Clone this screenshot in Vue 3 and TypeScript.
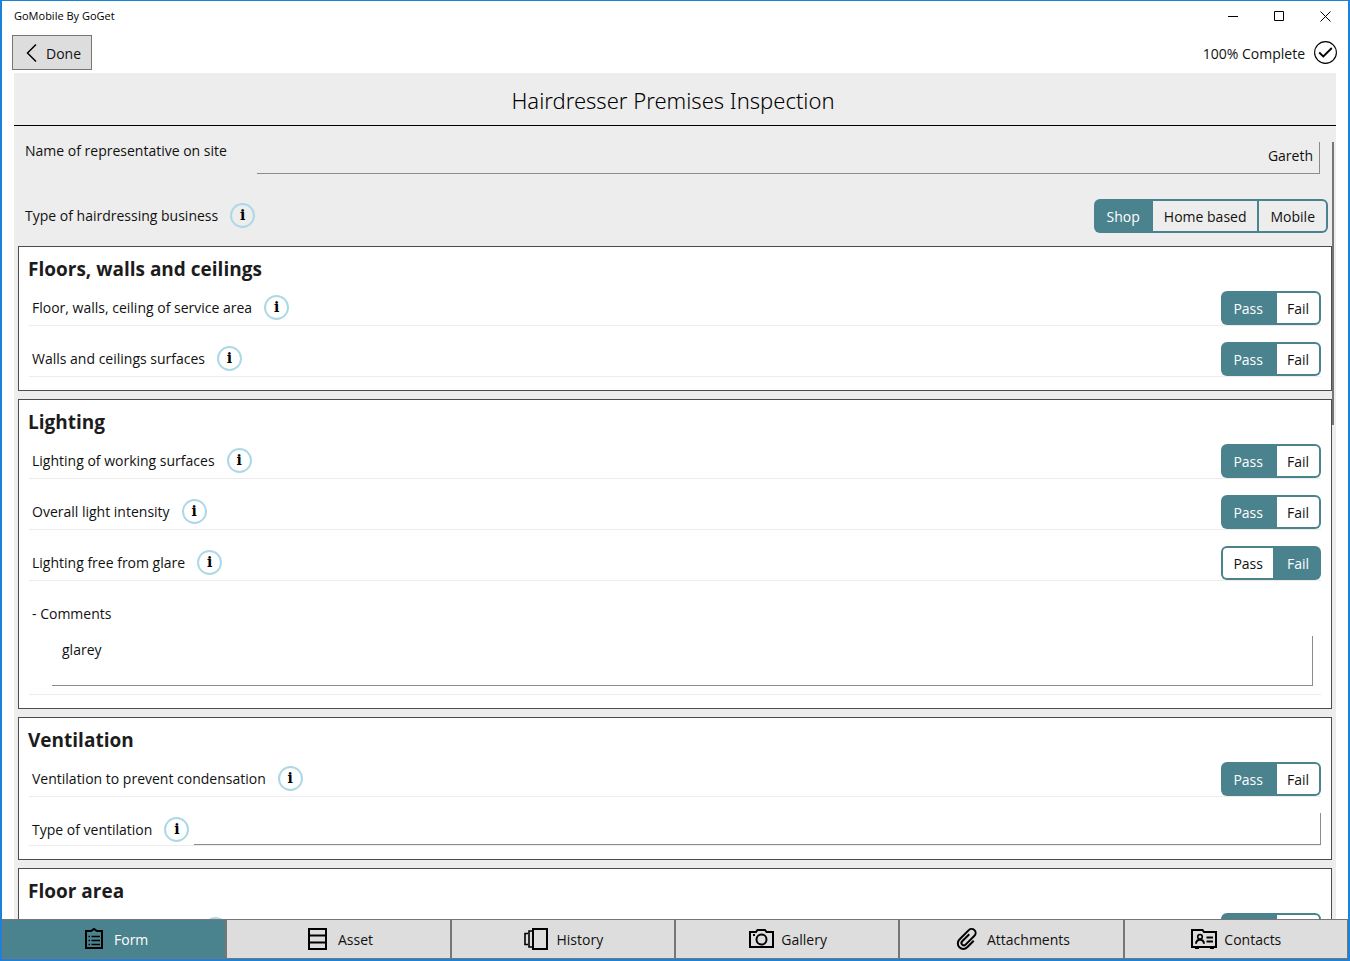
<script setup lang="ts">
import { reactive, ref } from 'vue'

interface Item {
  id: string
  label: string
  kind: 'check' | 'text'
}

interface Section {
  title: string
  items: Item[]
}

const representative = ref('Gareth')
const businessTypes = ['Shop', 'Home based', 'Mobile']
const businessType = ref('Shop')
const results = ['Pass', 'Fail']

const sections: Section[] = [
  {
    title: 'Floors, walls and ceilings',
    items: [
      { id: 'service', label: 'Floor, walls, ceiling of service area', kind: 'check' },
      { id: 'surfaces', label: 'Walls and ceilings surfaces', kind: 'check' },
    ],
  },
  {
    title: 'Lighting',
    items: [
      { id: 'working', label: 'Lighting of working surfaces', kind: 'check' },
      { id: 'intensity', label: 'Overall light intensity', kind: 'check' },
      { id: 'glare', label: 'Lighting free from glare', kind: 'check' },
    ],
  },
  {
    title: 'Ventilation',
    items: [
      { id: 'condensation', label: 'Ventilation to prevent condensation', kind: 'check' },
      { id: 'ventilationType', label: 'Type of ventilation', kind: 'text' },
    ],
  },
  {
    title: 'Floor area',
    items: [{ id: 'chair', label: 'Floor area for each chair', kind: 'check' }],
  },
]

const answers = reactive<Record<string, string>>({
  service: 'Pass',
  surfaces: 'Pass',
  working: 'Pass',
  intensity: 'Pass',
  glare: 'Fail',
  condensation: 'Pass',
  ventilationType: '',
  chair: 'Pass',
})
const comments = reactive<Record<string, string>>({ glare: 'glarey' })

const tabs = ['Form', 'Asset', 'History', 'Gallery', 'Attachments', 'Contacts']
const activeTab = ref('Form')
</script>

<template>
  <div class="window">
    <header class="titlebar">
      <span class="app-name">GoMobile By GoGet</span>
      <div class="window-buttons">
        <button type="button" aria-label="Minimize">
          <svg width="11" height="11" viewBox="0 0 11 11"><path d="M0 5.5H10" /></svg>
        </button>
        <button type="button" aria-label="Maximize">
          <svg width="11" height="11" viewBox="0 0 11 11"><path d="M.5 .5H9.5V9.5H.5Z" /></svg>
        </button>
        <button type="button" aria-label="Close">
          <svg width="11" height="11" viewBox="0 0 11 11"><path d="M.5 .5L10.5 10.5M10.5 .5L.5 10.5" /></svg>
        </button>
      </div>
    </header>

    <div class="toolbar">
      <button type="button" class="done">
        <svg width="12" height="20" viewBox="0 0 12 20"><path d="M10 1.5L1.5 10L10 18.5" /></svg>
        <span>Done</span>
      </button>
      <div class="status">
        <span>100% Complete</span>
        <svg width="23" height="23" viewBox="0 0 23 23">
          <circle cx="11.5" cy="11.5" r="10.9" />
          <path class="tick" d="M5.2 11.5L9.3 15.5L17.8 7" />
        </svg>
      </div>
    </div>

    <main class="sheet">
      <h1>Hairdresser Premises Inspection</h1>
      <div class="scroller">
        <div class="name-row">
          <label for="representative">Name of representative on site</label>
          <input id="representative" v-model="representative" class="line-input right" type="text" />
        </div>
        <div class="type-row">
          <span id="business-label" class="text">Type of hairdressing business</span>
          <button type="button" class="info" aria-label="About type of hairdressing business">i</button>
          <div class="segments narrow" role="radiogroup" aria-labelledby="business-label">
            <label v-for="t in businessTypes" :key="t" :class="{ on: businessType === t }">
              <input v-model="businessType" type="radio" name="business" :value="t" />{{ t }}
            </label>
          </div>
        </div>

        <section v-for="s in sections" :key="s.title" class="card">
          <h2>{{ s.title }}</h2>
          <template v-for="item in s.items" :key="item.id">
            <div v-if="item.kind === 'check'" class="row">
              <span :id="item.id + '-label'" class="text">{{ item.label }}</span>
              <button type="button" class="info" :aria-label="'About ' + item.label">i</button>
              <div class="segments" role="radiogroup" :aria-labelledby="item.id + '-label'">
                <label v-for="r in results" :key="r" :class="{ on: answers[item.id] === r }">
                  <input v-model="answers[item.id]" type="radio" :name="item.id" :value="r" />{{ r }}
                </label>
              </div>
            </div>
            <div v-else class="row text-row">
              <label :for="item.id" class="text">{{ item.label }}</label>
              <button type="button" class="info" :aria-label="'About ' + item.label">i</button>
              <input :id="item.id" v-model="answers[item.id]" class="line-input" type="text" />
            </div>
            <div v-if="item.id in comments" class="comment-row">
              <label :for="item.id + '-comment'">- Comments</label>
              <textarea :id="item.id + '-comment'" v-model="comments[item.id]"></textarea>
            </div>
          </template>
        </section>
        <div class="scroll-thumb"></div>
      </div>
    </main>

    <nav class="tabs">
      <button v-for="t in tabs" :key="t" type="button" :class="{ active: activeTab === t }" @click="activeTab = t">
        <svg width="28" height="24" viewBox="0 0 28 24">
          <g v-if="t === 'Form'">
            <path d="M6 4H11L14 2L17 4H22V21H6Z" />
            <path class="thin" d="M8.5 9.5H10M8.5 13.5H10M8.5 17.5H10M11.5 9.5H20M11.5 13.5H20M11.5 17.5H20" />
          </g>
          <g v-else-if="t === 'Asset'">
            <path d="M5 2H22V22H5ZM5 8.5H22M5 15.5H22" />
          </g>
          <g v-else-if="t === 'History'">
            <path d="M11 2H25V22H11Z" />
            <path class="thin" d="M10 4H7V20H10M6 6.5H3V17.5H6" />
          </g>
          <g v-else-if="t === 'Gallery'">
            <path d="M3 5H9L10.5 3H18L19.5 5H26V20H3Z" />
            <circle cx="14.5" cy="12.5" r="5" />
            <path class="dot" d="M6 7H8V9H6Z" />
          </g>
          <g v-else-if="t === 'Attachments'">
            <path
              transform="translate(14 12) rotate(45)"
              d="M6 -3.5V5.7A5.5 5.5 0 0 1 -5 5.7V-7.5A4 4 0 0 1 3 -7.5V5A2.4 2.4 0 0 1 -1.8 5V-5"
            />
          </g>
          <g v-else>
            <path d="M2 3H12.5L14 5H26V20H2Z" />
            <path class="dot" d="M5 19H9V22H5ZM20 19H24V22H20Z" />
            <circle class="thin" cx="10" cy="9.8" r="2.3" />
            <path d="M6 16.8C6.4 11.4 13.6 11.4 14 16.8M16.5 10.5H23M16.5 14.5H23" />
          </g>
        </svg>
        <span>{{ t }}</span>
      </button>
    </nav>
  </div>
</template>

<style>
body {
  margin: 0;
}
</style>

<style scoped>
.window {
  --teal: #4a838e;
  --paper: #ededed;
  --grey: #767676;
  box-sizing: border-box;
  height: 100vh;
  display: flex;
  flex-direction: column;
  overflow: hidden;
  border: 2px solid #1a82d8;
  border-top-width: 1px;
  background: #fff;
  color: #111;
  font-family: 'Open Sans', 'Noto Sans', sans-serif;
  font-size: 14px;
  line-height: 20px;
}

.window *,
.window *::before {
  box-sizing: border-box;
}

button,
input,
textarea {
  font: inherit;
  color: inherit;
  border-radius: 0;
  margin: 0;
}

svg {
  fill: none;
  stroke: #000;
  flex: none;
}

.titlebar {
  display: flex;
  justify-content: space-between;
  align-items: center;
  height: 30px;
  padding-left: 12px;
  flex: none;
}

.app-name {
  font-size: 11px;
  color: #000;
}

.window-buttons {
  display: flex;
}

.window-buttons button {
  display: flex;
  align-items: center;
  justify-content: center;
  width: 46px;
  height: 30px;
  padding: 0;
  border: 0;
  background: none;
}

.toolbar {
  display: flex;
  justify-content: space-between;
  align-items: center;
  padding: 4px 11px 3px 10px;
  flex: none;
}

.done {
  display: flex;
  align-items: center;
  gap: 8px;
  height: 35px;
  padding: 0 10px 0 13px;
  border: 1px solid var(--grey);
  background: #ddd;
}

.done svg {
  stroke-width: 1.5;
}

.status {
  display: flex;
  align-items: center;
  gap: 9px;
}

.done span,
.status span,
.tabs span {
  padding-top: 2px;
}

.status circle {
  stroke-width: 1.1;
}

.tick {
  stroke-width: 1.8;
}

.sheet {
  flex: 1;
  min-height: 0;
  display: flex;
  flex-direction: column;
  margin: 0 12px;
  background: var(--paper);
}

h1 {
  margin: 0;
  padding: 11px 4px 9px 0;
  border-bottom: 1px solid #000;
  text-align: center;
  font-family: 'Noto Sans', 'Open Sans', sans-serif;
  font-size: 22px;
  line-height: 32px;
  font-weight: 300;
  color: #000;
}

.scroller {
  position: relative;
  flex: 1;
  min-height: 0;
  margin-top: 16px;
  padding: 0 4px;
  overflow: hidden;
}

.scroll-thumb {
  position: absolute;
  top: 0;
  right: 2px;
  width: 2px;
  height: 283px;
  background: var(--grey);
}

.name-row {
  display: flex;
  gap: 30px;
  padding: 0 12px 0 7px;
}

.name-row label {
  line-height: 18px;
}

.line-input {
  flex: 1;
  min-width: 0;
  height: 32px;
  padding: 0 6px 4px;
  border: 0 solid #8c8c8c;
  border-right-width: 1px;
  border-bottom-width: 1px;
  background: transparent;
}

.right {
  text-align: right;
}

.type-row,
.row {
  display: flex;
  align-items: center;
}

.type-row {
  margin: 25px 4px 13px 7px;
}

.info {
  width: 25px;
  height: 25px;
  margin: 0 0 2px 12px;
  padding: 0;
  border: 2px solid #add8e6;
  border-radius: 50%;
  background: transparent;
  color: #000;
  font-family: 'DejaVu Serif', serif;
  font-size: 14px;
  line-height: 20px;
  font-weight: 700;
  text-align: center;
}

.segments {
  display: flex;
  gap: 4px;
  margin-left: auto;
  padding: 2px;
  border-radius: 6px;
  background: var(--teal);
  line-height: 28px;
}

.segments.narrow {
  gap: 2px;
}

.segments label {
  padding: 2px 10px 0;
  background: #fff;
}

.segments label:first-child {
  border-radius: 4px 0 0 4px;
}

.segments label:last-child {
  border-radius: 0 4px 4px 0;
}

.segments.narrow label {
  padding: 2px 11px 0;
  background: var(--paper);
}

.segments label.on,
.segments.narrow label.on {
  background: var(--teal);
  color: #fff;
}

.segments input {
  position: absolute;
  width: 1px;
  height: 1px;
  opacity: 0;
}

.card {
  margin-bottom: 8px;
  padding: 8px 10px 13px;
  border: 1px solid #4c4c4c;
  background: #fff;
}

h2 {
  margin: 0 0 8px -1px;
  font-size: 19px;
  line-height: 28px;
  font-weight: 700;
  color: #1c1c1c;
}

.row {
  padding-left: 3px;
  border-bottom: 1px solid #ececec;
}

.row + .row,
.comment-row {
  margin-top: 16px;
}

.text-row .text {
  padding-top: 2px;
}

.text-row .info {
  margin-bottom: 0;
}

.text-row .line-input {
  margin-left: 5px;
}

.comment-row {
  border-bottom: 1px solid #ececec;
  padding: 0 8px 8px 3px;
}

.comment-row label {
  display: block;
  line-height: 34px;
}

textarea {
  display: block;
  width: calc(100% - 20px);
  height: 50px;
  margin: 5px 0 0 20px;
  padding: 4px 10px;
  border: 0 solid #8c8c8c;
  border-right-width: 1px;
  border-bottom-width: 1px;
  background: transparent;
  resize: none;
  overflow: hidden;
}

.tabs {
  display: grid;
  grid-template-columns: repeat(6, 1fr);
  flex: none;
}

.tabs button {
  display: flex;
  align-items: center;
  justify-content: center;
  gap: 6px;
  height: 40px;
  padding: 0;
  border: 1px solid var(--grey);
  background: #ddd;
}

.tabs svg {
  stroke-width: 2;
}

.tabs .thin {
  stroke-width: 1.6;
}

.tabs .dot {
  fill: #000;
  stroke: none;
}

.tabs .active {
  background: var(--teal);
  color: #fff;
}
</style>
